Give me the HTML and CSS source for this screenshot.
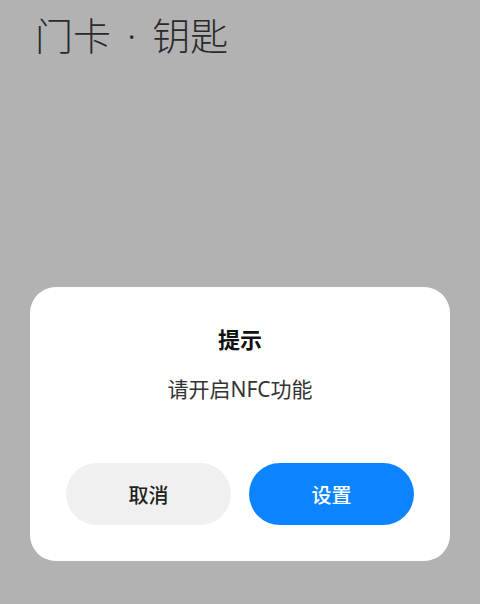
FILE: index.html
```html
<!DOCTYPE html>
<html lang="zh-CN">
<head>
    <meta charset="UTF-8">
    <meta name="viewport" content="width=device-width, initial-scale=1.0">
    <title>门卡 · 钥匙</title>
    <link rel="stylesheet" href="styles.css">
</head>
<body>
    <header class="page-header">
        <h1>门卡<span class="sep">·</span>钥匙</h1>
    </header>
    <div class="dialog">
        <h2>提示</h2>
        <p class="message">请开启NFC功能</p>
        <div class="actions">
            <button class="btn btn-cancel">取消</button>
            <button class="btn btn-confirm">设置</button>
        </div>
    </div>
</body>
</html>
```
FILE: styles.css
```css
body {
    margin: 0;
    height: 604px;
    background-color: #b2b2b2;
    font-family: "Noto Sans", "Noto Sans CJK SC", sans-serif;
    display: flex;
    flex-direction: column;
}
.page-header {
    padding: 8px 0 0 35px;
}
h1 {
    margin: 0;
    font-size: 38px;
    font-weight: 300;
    line-height: 54px;
    color: #2a2a2a;
}
.sep {
    margin: 0 16px;
}
.dialog {
    margin: auto 30px 43px;
    background: white;
    border-radius: 26px;
    padding: 38px 36px 36px;
    text-align: center;
}
h2 {
    margin: 0;
    font-size: 22px;
    font-weight: 700;
    line-height: 28px;
    color: #111;
}
.message {
    margin: 22px 0 0;
    font-size: 21px;
    line-height: 28px;
    color: #333;
}
.actions {
    display: flex;
    gap: 18px;
    margin-top: 60px;
}
.btn {
    flex: 1;
    height: 62px;
    border: none;
    border-radius: 31px;
    font-family: inherit;
    font-size: 20px;
    font-weight: 500;
}
.btn-cancel {
    background-color: #f0f0f0;
    color: #222;
}
.btn-confirm {
    background-color: #0d84ff;
    color: white;
}
```
